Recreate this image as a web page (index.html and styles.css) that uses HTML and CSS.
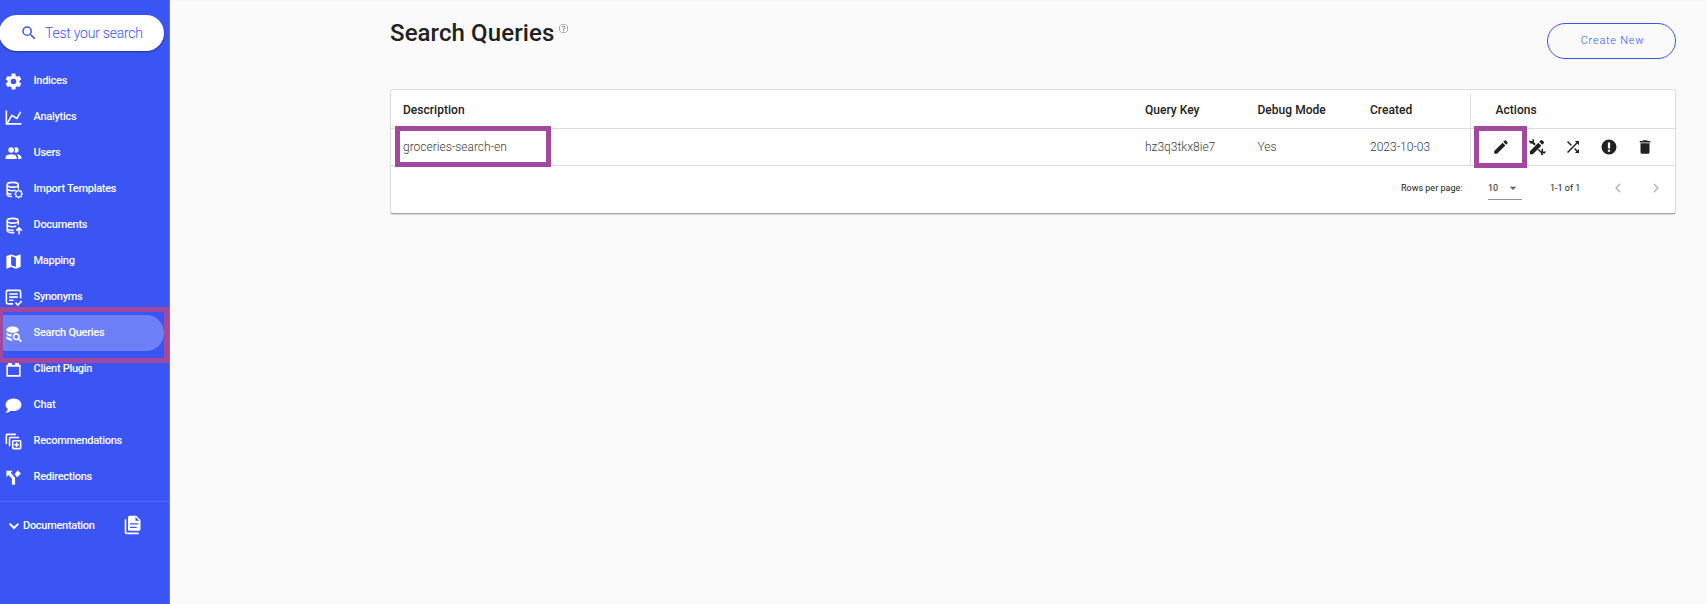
FILE: index.html
```html
<!DOCTYPE html>
<html lang="en">
<head>
<meta charset="utf-8">
<title>Search Queries</title>
<link rel="stylesheet" href="styles.css">
</head>
<body>
<div class="app">
  <aside class="sidebar">
    <button class="test-search">
      <svg viewBox="0 0 24 24"><path d="M15.5 14h-.79l-.28-.27A6.47 6.47 0 0 0 16 9.5 6.5 6.5 0 1 0 9.5 16c1.61 0 3.09-.59 4.23-1.57l.27.28v.79l5 4.99L20.49 19zm-6 0a4.5 4.5 0 1 1 0-9 4.5 4.5 0 0 1 0 9z"/></svg>
      <span>Test your search</span>
    </button>
    <nav class="menu">
      <a class="item"><svg viewBox="0 0 24 24"><path d="M12 15.5A3.5 3.5 0 0 1 8.500 12 3.500 3.500 0 0 1 12 8.500a3.500 3.500 0 0 1 3.500 3.500 3.500 3.500 0 0 1-3.500 3.500m7.430-2.530c.04-.32.07-.64.07-.97s-.03-.66-.07-1l2.110-1.630c.19-.15.24-.42.12-.64l-2-3.460c-.12-.22-.39-.31-.61-.22l-2.490 1c-.52-.39-1.060-.73-1.690-.98l-.37-2.650A.506.506 0 0 0 14 2h-4c-.25 0-.46.18-.5.420l-.37 2.650c-.63.250-1.170.590-1.690.980l-2.490-1c-.22-.09-.49 0-.61.220l-2 3.460c-.13.220-.07.490.12.640L4.570 11c-.04.340-.07.670-.07 1s.03.650.07.970l-2.110 1.660c-.19.150-.25.420-.12.640l2 3.460c.12.220.39.300.61.220l2.490-1.010c.52.400 1.060.740 1.690.990l.37 2.650c.04.240.25.420.5.420h4c.25 0 .46-.18.5-.42l.37-2.650c.63-.26 1.170-.59 1.690-.99l2.490 1.010c.22.080.49 0 .61-.22l2-3.460c.12-.22.07-.49-.12-.64z"/></svg><span>Indices</span></a>
      <a class="item"><svg viewBox="0 0 24 24"><path d="M16 11.780 20.240 4.450l1.730 1-5.230 9.050-6.510-3.750L5.460 19H22v2H2V3h2v14.540L9.500 8z"/></svg><span>Analytics</span></a>
      <a class="item"><svg viewBox="0 0 24 24"><path d="M16 17v2H2v-2s0-4 7-4 7 4 7 4m-3.500-9.500A3.500 3.500 0 1 0 9 11a3.500 3.500 0 0 0 3.500-3.500m3.440 5.500A5.320 5.320 0 0 1 18 17v2h4v-2s0-3.630-6.060-4M15 4a3.390 3.390 0 0 0-1.930.590 5 5 0 0 1 0 5.820A3.390 3.390 0 0 0 15 11a3.500 3.500 0 0 0 0-7"/></svg><span>Users</span></a>
      <a class="item"><svg viewBox="0 0 24 24" class="line"><ellipse cx="11" cy="6" rx="7" ry="3"/><path d="M4 6v12c0 1.600 2.500 2.800 6 3M18 6v5M4 10.500c0 1.700 3 3 7 3 1.500 0 2.500-.1 3.500-.5M4 15c0 1.500 2 2.500 5.500 2.900"/><path d="m18.500 12.500 1.300 1.500h2v2l1.200 1.500-1.200 1.500v2h-2l-1.300 1.500-1.300-1.500h-2v-2L14 17.500l1.200-1.500v-2h2z" stroke-width="1.600"/></svg><span>Import Templates</span></a>
      <a class="item"><svg viewBox="0 0 24 24" class="line"><ellipse cx="11" cy="6" rx="7" ry="3"/><path d="M4 6v12c0 1.700 3 3 7 3h2M18 6v5M4 10.500c0 1.700 3 3 7 3 2 0 3.500-.3 4.500-.8M4 15c0 1.700 3 3 7 3h1"/><path d="M19 23v-7M15.500 18.500 19 15l3.500 3.500"/></svg><span>Documents</span></a>
      <a class="item"><svg viewBox="0 0 24 24"><path d="m20.500 3-.16.030L15 5.100 9 3 3.360 4.900c-.21.070-.36.250-.36.480V20.500c0 .28.22.500.500.500l.16-.03L9 18.900l6 2.100 5.640-1.900c.21-.07.36-.25.360-.48V3.500c0-.28-.22-.5-.5-.5zM15 19l-6-2.110V5l6 2.110z"/></svg><span>Mapping</span></a>
      <a class="item"><svg viewBox="0 0 24 24" class="line"><path d="M11.500 20H5a2 2 0 0 1-2-2V5a2 2 0 0 1 2-2h14a2 2 0 0 1 2 2v8M6.500 7.500h11M6.500 11.500h11M6.500 15.500H12M14.500 18.500l3 3 5-5.200"/></svg><span>Synonyms</span></a>
      <a class="item selected"><svg viewBox="0 0 24 24"><path d="M18.700 7.500C18.700 9.500 15.500 11 11 11S3 9.500 3 7.300 6.600 3 11 3s7.700 2.200 7.700 4.500zM3 10c1 1.700 4 3 7.500 3-.9.900-1.300 1.800-1.400 3C5.500 15.700 3 14.300 3 12.400zM3 15c1 1.700 3.500 2.700 6.300 3 .3 1.200 1 2.200 1.900 3C6.500 21 3 19.500 3 17.300z"/><path fill-rule="evenodd" d="M15.500 11.500a4.500 4.500 0 1 0 2.400 8.300L21 23l1.600-1.600-3.200-3.100a4.500 4.500 0 0 0-3.900-6.800zm0 2a2.500 2.500 0 1 1 0 5 2.500 2.500 0 0 1 0-5z"/></svg><span>Search Queries</span></a>
      <a class="item"><svg viewBox="0 0 24 24"><path fill-rule="evenodd" d="M5 3h5v3h4V3h5v3h2v15H3V6h2zm0 5.500V19h14V8.500z"/></svg><span>Client Plugin</span></a>
      <a class="item"><svg viewBox="0 0 24 24"><path d="M12 3c5.500 0 10 3.580 10 8s-4.500 8-10 8c-1.240 0-2.430-.18-3.530-.5C5.550 21 2 21 2 21c2.330-2.330 2.700-3.900 2.750-4.500C3.050 15.070 2 13.130 2 11c0-4.420 4.500-8 10-8"/></svg><span>Chat</span></a>
      <a class="item"><svg viewBox="0 0 24 24"><path fill-rule="evenodd" d="M2 15V4a2 2 0 0 1 2-2h11v2H4v11zM6 18V8a2 2 0 0 1 2-2h11v2H8v10zM12 10h8a2 2 0 0 1 2 2v8a2 2 0 0 1-2 2h-8a2 2 0 0 1-2-2v-8a2 2 0 0 1 2-2zm0 2v8h8v-8z"/><path d="M15 13h2v2h2v2h-2v2h-2v-2h-2v-2h2z"/></svg><span>Recommendations</span></a>
      <a class="item"><svg viewBox="0 0 24 24"><path d="M3 3.500h8L8.500 6l5.500 6.200V21h-4v-7.500L5.700 8.800 3 11.500zM17.200 2.800 21.500 7l-5 4.800-3-3.800z"/></svg><span>Redirections</span></a>
    </nav>
    <div class="docs">
      <svg class="chevron" viewBox="0 0 24 24"><path d="M7 8 12 12.800 17 8l1.800 1.800L12 16.500 5.200 9.800z"/></svg>
      <span>Documentation</span>
      <svg class="files" viewBox="0 0 24 24"><path fill-rule="evenodd" d="M16 1H8a2 2 0 0 0-2 2v14a2 2 0 0 0 2 2h11a2 2 0 0 0 2-2V6zM8.500 10h10v1.500h-10zm0 4h8v1.500h-8zM15 7V2.500L19.500 7z"/><path d="M2 5h2v16h15v2H4a2 2 0 0 1-2-2z"/></svg>
    </div>
    <div class="mark mark-nav"></div>
  </aside>

  <main class="content">
    <header class="page-head">
      <h1>Search Queries</h1>
      <svg class="help" viewBox="0 0 24 24"><path d="M11 18h2v-2h-2zm1-16a10 10 0 1 0 0 20 10 10 0 0 0 0-20zm0 18.500a8.500 8.500 0 1 1 0-17 8.500 8.500 0 0 1 0 17zM12 6a4 4 0 0 0-4 4h1.800a2.200 2.200 0 0 1 4.400 0c0 2-3.100 1.750-3.100 5h1.800c0-2.250 3.100-2.500 3.100-5a4 4 0 0 0-4-4z"/></svg>
      <button class="create">Create New</button>
    </header>

    <section class="card">
      <div class="row head">
        <div>Description</div><div>Query Key</div><div>Debug Mode</div><div>Created</div><div class="actions-title">Actions</div>
      </div>
      <div class="row data">
        <div>groceries-search-en</div><div>hz3q3tkx8ie7</div><div>Yes</div><div>2023-10-03</div>
        <div class="actions">
          <svg viewBox="0 0 24 24"><path d="M20.710 7.040c.39-.39.39-1.040 0-1.410l-2.340-2.340c-.37-.39-1.020-.39-1.410 0l-1.840 1.830 3.750 3.750M3 17.250V21h3.750L17.810 9.930l-3.750-3.750z"/></svg>
          <svg viewBox="0 0 24 24"><path d="M2.500 17.500 13.800 6.200l4 4L6.500 21.500h-4zM15 5l2-2q1-.8 2 0l2 2q.8 1 0 2l-2 2zM10.300 8 7.700 5.400 8.500 2.500 6 1v3H3L1 3l1.500 4 3.500.5L8.500 10zM14.500 14.500 18 18v-3l2-1.500V18h4l-1.500 2.500H19l1.500 2.500-3-.5-.5-3-4-3.500z"/></svg>
          <svg viewBox="0 0 24 24"><path d="M14.830 13.410 13.420 14.820l3.130 3.130L14.500 20H20v-5.500l-2.040 2.040zM14.500 4l2.040 2.040L4 18.590 5.410 20 17.960 7.460 20 9.500V4zM10.590 9.170 5.410 4 4 5.410l5.170 5.170z"/></svg>
          <svg viewBox="0 0 24 24"><path fill-rule="evenodd" d="M12 2a10 10 0 1 0 0 20 10 10 0 0 0 0-20zM10.500 6h3v8h-3zm0 9.500h3v2.800h-3z"/></svg>
          <svg viewBox="0 0 24 24"><path d="M19 4h-3.500l-1-1h-5l-1 1H5v2h14M6 19a2 2 0 0 0 2 2h8a2 2 0 0 0 2-2V7H6z"/></svg>
        </div>
      </div>
      <footer class="pager">
        <span class="label">Rows per page:</span>
        <div class="select"><span>10</span><svg viewBox="0 0 24 24"><path d="m7 10 5 5 5-5z"/></svg></div>
        <span class="range">1-1 of 1</span>
        <svg class="arrow" viewBox="0 0 24 24"><path d="M15.410 16.580 10.830 12l4.580-4.590L14 6l-6 6 6 6z"/></svg>
        <svg class="arrow next" viewBox="0 0 24 24"><path d="M8.590 16.580 13.170 12 8.590 7.410 10 6l6 6-6 6z"/></svg>
      </footer>
      <div class="mark mark-desc"></div>
      <div class="mark mark-edit"></div>
    </section>
  </main>
</div>
</body>
</html>
```
FILE: styles.css
```css
* { box-sizing: border-box; }
body { margin: 0; font-family: Roboto, "Liberation Sans", sans-serif; color: #212121; background: #fafafa; }
svg { display: block; flex: none; fill: currentColor; }
button { font-family: inherit; margin: 0; }
.app { display: flex; height: 604px; overflow: hidden; }

.sidebar { position: relative; flex: none; width: 170px; padding-top: 15px; background: #3b54f4; border-right: 1px solid #5f73f6; color: #fff; }
.test-search { display: flex; align-items: center; width: 165px; height: 36px; margin-left: -1px; padding: 0 0 0 21px; border: 0; border-radius: 18px; background: #fff; color: #3b54f4; font-size: 14px; font-weight: 300; letter-spacing: -.23px; box-shadow: 0 1px 2px rgba(0,0,0,.4); white-space: nowrap; }
.test-search svg { width: 18px; height: 18px; margin-right: 7px; }
.menu { padding-top: 12px; }
.item { display: flex; align-items: center; width: 164px; height: 36px; padding-left: 4px; font-size: 11px; font-weight: 500; letter-spacing: -.28px; }
.item svg { width: 19px; height: 19px; margin-top: 1px; }
.item span { margin-left: 10.500px; margin-top: -1px; white-space: nowrap; }
.item .line { fill: none; stroke: currentColor; stroke-width: 2; }
.selected { background: #6e80f7; border-radius: 0 18px 18px 0; }
.docs { display: flex; align-items: center; height: 48px; margin-top: 6px; border-top: 1px solid #5569f6; font-size: 11px; font-weight: 500; letter-spacing: -.28px; }
.chevron { width: 18px; height: 18px; margin-left: 5px; }
.files { width: 20px; height: 20px; margin: -1px 0 0 28px; }

.mark { position: absolute; border: 5px solid #a2489f; }
.mark-nav { left: -2px; top: 307px; width: 171px; height: 56px; }
.mark-desc { left: 4px; top: 36px; width: 156px; height: 41px; }
.mark-edit { right: 148px; top: 36px; width: 53px; height: 42px; }

.content { flex: 1; padding: 17px 31px 0 220px; box-shadow: inset 0 1px 2px rgba(0,0,0,.02); }
.page-head { display: flex; align-items: flex-start; height: 72px; }
h1 { margin: 0; font-size: 24px; font-weight: 500; line-height: 32px; letter-spacing: .1px; }
.help { width: 11px; height: 11px; margin: 6px 0 0 4px; color: #777; }
.create { width: 129px; height: 36px; margin: 6px 0 0 auto; padding: 0 0 2px 2px; border: 1px solid #3b54f4; border-radius: 18px; background: transparent; color: #3b54f4; font-size: 11px; font-weight: 300; letter-spacing: .75px; }

.card { position: relative; height: 125px; background: #fff; border: 1px solid #dedede; border-bottom: 1px solid #a5a5a5; border-radius: 3px; box-shadow: 0 1px 1px rgba(0,0,0,.15); }
.row { display: grid; grid-template-columns: 742px 112.500px 112.500px 100px 1fr; align-items: center; padding-left: 12px; border-bottom: 1px solid #dcdcdc; font-size: 12px; white-space: nowrap; }
.head { height: 39px; font-weight: 500; padding-top: 1px; letter-spacing: .03px; }
.data { height: 37px; font-weight: 300; color: #3c3c3c; }
.actions-title, .actions { border-left: 1px solid #e0e0e0; }
.actions-title { align-self: end; height: 35px; line-height: 34px; padding-left: 24.500px; }
.actions { display: flex; gap: 18px; align-items: center; height: 36px; padding-left: 21px; color: #212121; }
.actions svg { width: 18px; height: 18px; }
.pager { display: flex; align-items: center; height: 45px; padding-bottom: 1px; font-size: 9px; }
.label { width: 87px; margin-left: 1010px; }
.select { display: flex; align-items: center; justify-content: space-between; width: 34px; height: 23px; padding-right: 1px; border-bottom: 1px solid #949494; }
.select svg { width: 16px; height: 16px; color: #616161; }
.range { width: 59px; margin-left: 28px; }
.arrow { width: 18px; height: 18px; color: #b8b8b8; }
.next { margin-left: 20px; }
```
